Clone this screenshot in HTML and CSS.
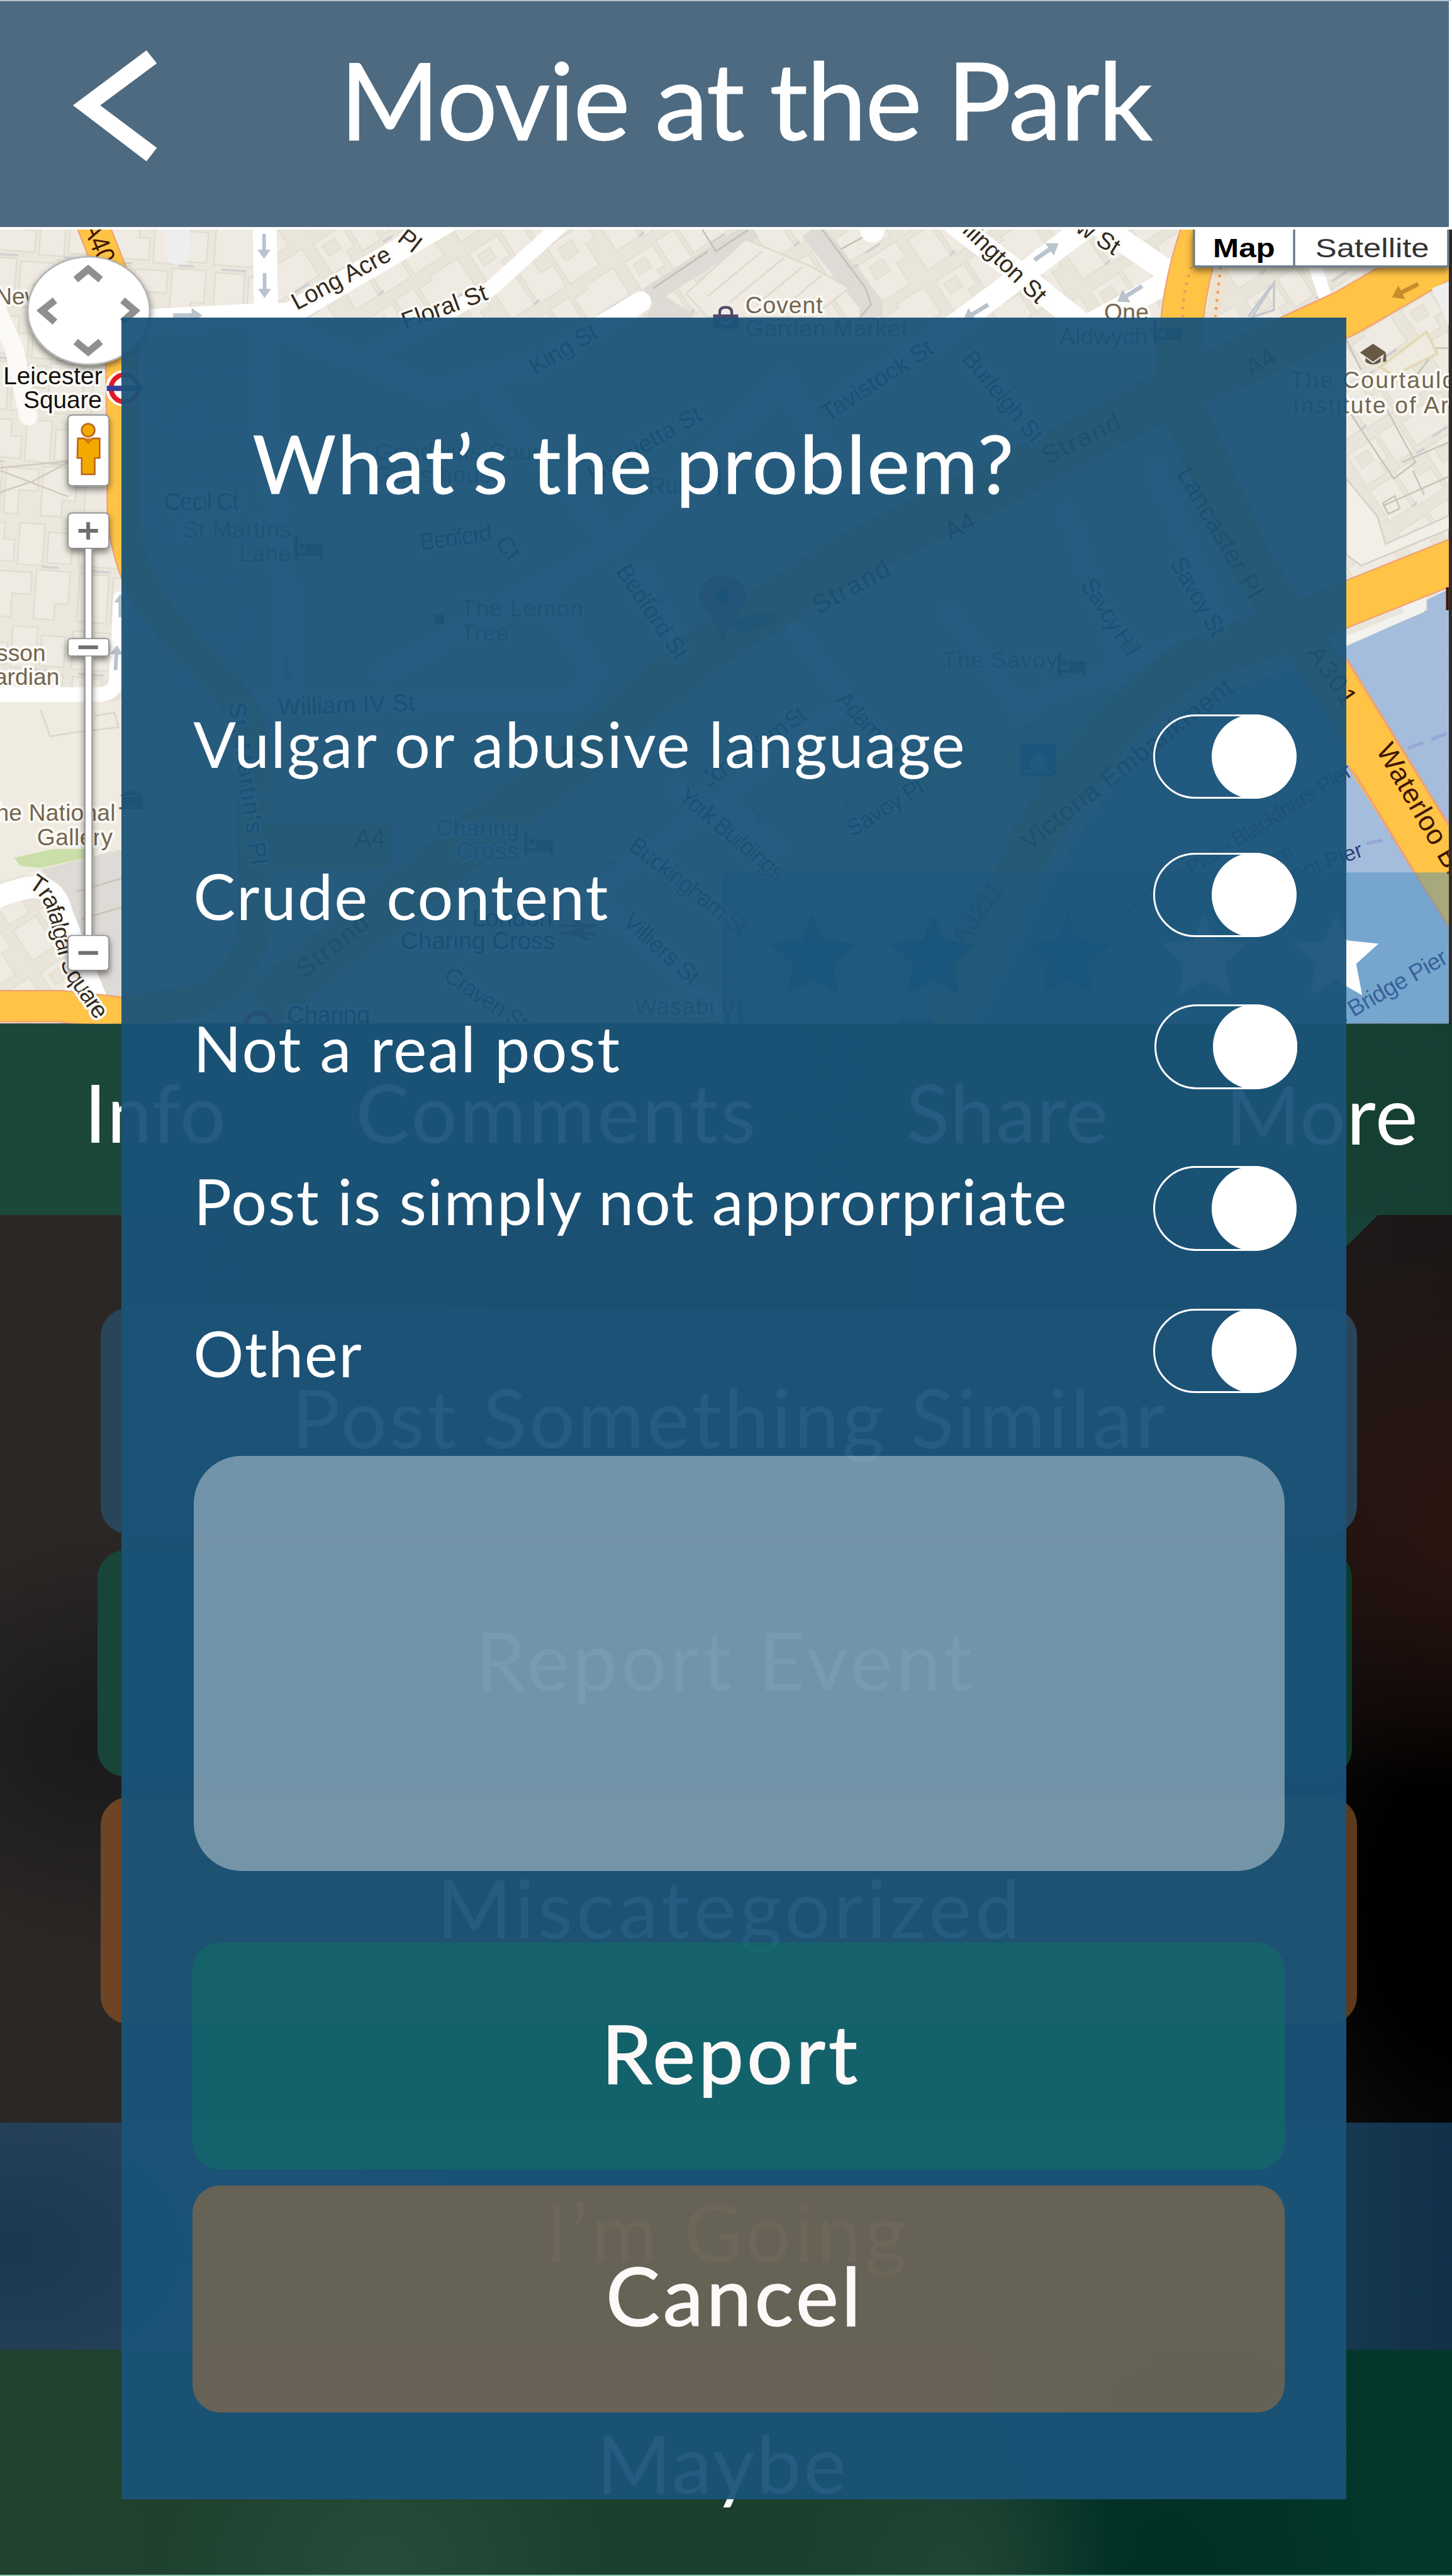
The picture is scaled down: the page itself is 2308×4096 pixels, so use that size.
FILE: index.html
```
<!DOCTYPE html>
<html lang="en">
<head>
<meta charset="utf-8">
<title>Movie at the Park</title>
<link rel="stylesheet" href="styles.css">
</head>
<body>
<div class="screen">
  <header class="topbar">
    <svg class="back" viewBox="0 0 155 204"><path d="M135 0 0 101 135 204 154 179 50 101 154 24Z" fill="#fff"/></svg>
    <h1>Movie at the Park</h1>
  </header>

  <svg class="map" viewBox="0 422 2667 1460" preserveAspectRatio="none">
    <defs>
      <pattern id="blocks" width="230" height="170" patternUnits="userSpaceOnUse" patternTransform="rotate(-33)">
        <rect width="230" height="170" fill="#e9e5da"/>
        <g fill="#efebe2" stroke="#e3ded2" stroke-width="2.5">
          <path d="M8 10h62v44h-18v22H8Z"/><path d="M78 8h40v62H78Z"/><path d="M126 14h30v-8h60v58h-90Z"/>
          <path d="M8 88h50v66H8Z"/><path d="M66 82h34v30h26v46H66Z"/><path d="M134 78h84v34h-20v46h-64Z"/>
          <path d="M150 92h30v26h-30Z" fill="#e9e5da"/><path d="M20 22h26v22H20Z" fill="#e9e5da"/>
        </g>
        <path d="M118 76h18M58 154l12-2M160 66h32" stroke="#cfccd2" stroke-width="4"/>
      </pattern>
      <pattern id="plots" width="210" height="190" patternUnits="userSpaceOnUse" patternTransform="rotate(4)">
        <rect width="210" height="190" fill="#ebe7dc"/>
        <g fill="#efebe2" stroke="#e0dbcf" stroke-width="2.5">
          <path d="M6 8h70v30h20v40H6Z"/><path d="M104 6h46v76h-46Z"/><path d="M158 20h44v56h-44Z"/>
          <path d="M10 92h54v88H10Z"/><path d="M72 96h60v40H98v44H72Z"/><path d="M140 90h62v60h-24v30h-38Z"/>
        </g>
        <path d="M20 86h46M150 84h30" stroke="#d3cfd2" stroke-width="4"/>
      </pattern>
      <filter id="soft" x="-20%" y="-20%" width="140%" height="150%"><feDropShadow dx="0" dy="6" stdDeviation="6" flood-color="#000" flood-opacity=".5"/></filter>
      <path id="trafalgar" d="M50 1632C100 1648 92 1740 124 1800L200 1910"/>
      <clipPath id="mapclip"><rect x="0" y="422" width="2661" height="1460"/></clipPath>
      <path id="star" d="M0-55 20-7 78-1 37 36 48 94 0 66-48 94-37 36-78-1-20-7Z"/>
      <g id="bed"><path d="M0 0v44M0 34h46M46 16v28" stroke-width="6" fill="none"/><path d="M18 16h26v14H18Z"/><circle cx="10" cy="19" r="5"/></g>
      <path id="arrow" d="M0-4h34v-10l20 14-20 14v-10H0Z"/>
    </defs>
    <rect x="0" y="422" width="2667" height="1460" fill="#302b29"/>
    <g clip-path="url(#mapclip)">
      <rect x="0" y="422" width="2661" height="1460" fill="url(#blocks)"/>
      <path d="M0 422H470V1270H0Z" fill="url(#plots)"/>
      <path d="M304 422H348V470Q348 487 326 487T304 462Z" fill="#eeeeee"/>
      <path d="M0 1290H223V1560L0 1620Z" fill="#efebe0"/>
      <path d="M75 1306 92 1354 132 1347 218 1337 210 1310 175 1316" fill="none" stroke="#dcd7ca" stroke-width="3"/>
      <path d="M0 860 125 848M0 865 125 913M0 905 60 885 125 850" fill="none" stroke="#d0cbbd" stroke-width="3"/>
      <path d="M75 1599 223 1562V1840L175 1830 120 1650Z" fill="#dedad5"/>
      <path d="M140 1640 223 1615M150 1690 223 1668" stroke="#c9c4b8" stroke-width="3"/>
      <path d="M26 1577 98 1561H172V1574L75 1596 37 1592Z" fill="#cadfaa"/>
      <g fill="none" stroke="#dedad5">
        <path d="M1385 422 1190 545" stroke-width="34"/><path d="M1490 422 1600 560V600" stroke-width="42"/>
        <path d="M1200 560 1262 600" stroke-width="50"/>
      </g>
      <g fill="none" stroke="#c5c0b3" stroke-width="3"><path d="M1290 422 1315 462 1375 422M1510 422 1590 530 1600 560 1580 583M1545 458 1585 436M1200 530 1300 462"/></g>
      <path d="M1260 540 1370 440 1490 490 1560 530 1490 583H1300Z" fill="#efebe2" stroke="#dfdace" stroke-width="3"/>
      <path d="M1300 545 1400 462M1340 556 1440 474M1390 560 1475 490M1440 565 1510 505" stroke="#dfdace" stroke-width="3"/>

      <g fill="none" stroke="#fff" stroke-linecap="round">
        <path d="M486 400 492 800 530 1140 528 1300" stroke-width="44"/>
        <path d="M260 590 486 578 530 578 825 405" stroke-width="42"/>
        <path d="M480 590 800 720 1000 660 1177 555" stroke-width="38"/>
        <path d="M700 640 900 532 1040 405" stroke-width="28"/>
        <path d="M1602 415V424" stroke-width="44"/>
        <path d="M1752 410 1900 525 1980 590" stroke-width="42"/>
        <path d="M2010 405 1765 590 1540 740" stroke-width="42"/>
        <path d="M2000 400 2160 510 1960 620" stroke-width="42"/>
        <path d="M2400 440 2432 540" stroke-width="24"/>
        <path d="M-10 560 26 640 52 765" stroke-width="34" stroke="#fbfaf6"/>
        <path d="M-10 1277H180Q215 1277 214 1240L222 1100" stroke-width="27"/>
        <path d="M-10 1652C60 1622 100 1620 114 1680L190 1870" stroke-width="40"/>
        <path d="M900 730 1130 1000 1440 700 1520 840" stroke-width="36"/>
        <path d="M700 1240 1130 1000M780 1290H1050L1090 1240 1000 1100M460 1290H900" stroke-width="34"/>
        <path d="M1460 1160 1560 1290 1120 1620M1240 1450 1440 1620M1080 1640 1340 1880M1330 1470 1470 1600 1900 1330" stroke-width="30"/>
        <path d="M2120 860 2250 1160M1960 940 2060 1240M1740 1120 1870 1300 2180 1180" stroke-width="30"/>
        <path d="M1180 1050 1270 1230" stroke-width="30"/>
      </g>
      <path d="M1430 1580 1750 1380 2080 1260 1850 1500 1700 1700H1480Z" fill="#cadfaa"/>

      <path d="M2661 1083 2621 1103V1122L2473 1188 2230 1280Q2050 1400 1930 1620L1800 1882H2661Z" fill="#a5bddc"/>
      <path d="M2661 1070 2621 1096 2616 1125 2473 1186V1130Z" fill="#f2f2ee"/>
      <path d="M2473 1170V1150L2570 1110 2580 1125Z" fill="#e9e5da"/>

      <g fill="none" stroke="#f0a077" stroke-linejoin="round">
        <path d="M165 400 222 545 226 950Q240 1080 320 1160L410 1260Q462 1310 466 1400L468 1690Q460 1800 360 1840L223 1862 110 1850-10 1850" stroke-width="60"/>
        <path d="M468 1556H720M480 1850 760 1630 1050 1400 1300 1190 1550 1030 1850 880 2124 735 2300 655 2473 575 2680 455" stroke-width="88"/>
        <path d="M2218 400C2170 520 2170 600 2160 720L2300 1040 2470 1290 2720 1720" stroke-width="80"/>
        <path d="M2700 1020 2400 1140 2180 1220Q2000 1360 1900 1540L1740 1890" stroke-width="84"/>
      </g>
      <g fill="none" stroke="#ffc345" stroke-linejoin="round">
        <path d="M165 400 222 545 226 950Q240 1080 320 1160L410 1260Q462 1310 466 1400L468 1690Q460 1800 360 1840L223 1862 110 1850-10 1850" stroke-width="55"/>
        <path d="M468 1556H720M480 1850 760 1630 1050 1400 1300 1190 1550 1030 1850 880 2124 735 2300 655 2473 575 2680 455" stroke-width="83"/>
        <path d="M2218 400C2170 520 2170 600 2160 720L2300 1040 2470 1290 2720 1720" stroke-width="75"/>
        <path d="M2700 1020 2400 1140 2180 1220Q2000 1360 1900 1540L1740 1890" stroke-width="79"/>
      </g>
      <path d="M2473 1211 2661 1517V1704L2598 1604 2473 1406Z" fill="#ffc345"/>
      <path d="M2473 1211 2661 1517M2661 1704 2598 1604 2490 1425 2473 1406" fill="none" stroke="#f0a077" stroke-width="4"/>
      <path d="M2235 490Q2215 540 2218 583H2240L2258 490Z" fill="#ede3cf"/>
      <path d="M2188 490Q2172 540 2172 583M2242 490 2232 583" fill="none" stroke="#ef9a62" stroke-width="5" stroke-dasharray="5 10"/>
      <path d="M2586 1376 2661 1347M2510 1551 2557 1541" stroke="#98a6d8" stroke-width="6" stroke-dasharray="30 16"/>

      <g fill="none" stroke="#c9c4b8" stroke-width="3">
        <path d="M2473 625 2500 680M2575 850 2680 805M2595 865 2616 910M2540 930 2680 868M2600 640 2680 640M2594 700 2640 640" />
        <path d="M2480 760 2540 740 2600 850 2560 880ZM2500 1030 2680 950M2540 925 2550 945 2571 935 2562 912Z"/>
      </g>
      <path d="M2473 880 2530 950 2545 1000 2680 940V965L2500 1040 2473 1020Z" fill="#f2efe6" stroke="#d6d1c8" stroke-width="3"/>
      <path d="M2535 675 2620 610 2640 650 2560 690Z" fill="#efebe0" stroke="#e3d9b6" stroke-width="5"/>
      <path d="M2340 520 2300 583 2340 570ZM2293 582 2335 525" fill="none" stroke="#c3c7d0" stroke-width="4"/>
      <path d="M2630 530 2680 510V640Z" fill="#eeeeee"/>

      <g fill="#b9c3ce">
        <use href="#arrow" transform="translate(485 430) rotate(90) scale(.85)"/><use href="#arrow" transform="translate(486 502) rotate(90) scale(.85)"/>
        <use href="#arrow" transform="translate(318 580)"/><use href="#arrow" transform="translate(212 1232) rotate(-86) scale(.85)"/>
        <use href="#arrow" transform="translate(1900 478) rotate(-35)"/><use href="#arrow" transform="translate(2098 526) rotate(148)"/>
        <use href="#arrow" transform="translate(1815 560) rotate(148)"/><use href="#arrow" transform="translate(221 1135) rotate(-90) scale(.8)"/>
        <use href="#arrow" transform="translate(370 735) rotate(148)"/><use href="#arrow" transform="translate(1180 1120) rotate(-30)"/>
        <use href="#arrow" transform="translate(1375 1478) rotate(48)"/><use href="#arrow" transform="translate(1595 1455) rotate(148)"/>
        <use href="#arrow" transform="translate(1090 1615) rotate(-40)"/><use href="#arrow" transform="translate(527 1205) rotate(90)"/>
      </g>
      <use href="#arrow" transform="translate(2605 522) rotate(153)" fill="#c58e2b"/>

      <g class="road">
        <text x="152" y="416" textLength="78" lengthAdjust="spacingAndGlyphs" transform="rotate(68 152 416)" style="font-size:50px;fill:#401600;stroke:none">A40</text>
        <text x="728" y="442" transform="rotate(38 728 442)">Pl</text>
        <text x="545" y="571" textLength="200" transform="rotate(-28 545 571)">Long Acre</text>
        <text x="744" y="606" textLength="164" transform="rotate(-20 744 606)">Floral St</text>
        <text x="983" y="690" textLength="138" transform="rotate(-31 983 690)">King St</text>
        <text x="1090" y="888" textLength="234" transform="rotate(-30 1090 888)">Henrietta St</text>
        <text x="1520" y="776" textLength="236" transform="rotate(-33 1520 776)">Tavistock St</text>
        <text x="1905" y="560" text-anchor="end" transform="rotate(44 1905 560)">Wellington St</text>
        <text x="2046" y="470" text-anchor="end" transform="rotate(32 2046 470)">Bow St</text>
        <text x="1765" y="660" textLength="205" transform="rotate(50 1765 660)">Burleigh St</text>
        <text x="1130" y="1050" textLength="200" transform="rotate(56 1130 1050)">Bedford St</text>
        <text x="1300" y="1450" textLength="225" transform="rotate(-35 1300 1450)">John Adam St</text>
        <text x="1533" y="1288" textLength="150" transform="rotate(47 1533 1288)">Adam St</text>
        <text x="1243" y="1468" textLength="240" transform="rotate(40 1243 1468)">York Buildings</text>
        <text x="1152" y="1560" textLength="262" transform="rotate(38 1152 1560)">Buckingham St</text>
        <text x="1142" y="1698" textLength="172" transform="rotate(42 1142 1698)">Villiers St</text>
        <text x="1565" y="1540" textLength="160" transform="rotate(-32 1565 1540)">Savoy Pl</text>
        <text x="2148" y="1035" textLength="160" transform="rotate(60 2148 1035)">Savoy St</text>
        <text x="1984" y="1075" textLength="160" transform="rotate(57 1984 1075)">Savoy Hill</text>
        <text x="511" y="1315" textLength="252" transform="rotate(-2 511 1315)">William IV St</text>
        <text x="420" y="1294" textLength="300" transform="rotate(82 420 1294)">St. Martin's Pl</text>
        <text x="812" y="1800" textLength="175" transform="rotate(34 812 1800)">Craven St</text>
        <text x="773" y="1012" textLength="134" transform="rotate(-8 773 1012)">Bedford</text>
        <text x="908" y="1000" transform="rotate(50 908 1000)">Ct</text>
        <text x="301" y="938" textLength="138">Cecil Ct</text>
        <text><textPath href="#trafalgar" textLength="282">Trafalgar Square</textPath></text>
      </g>
      <g class="trunk">
        <text x="1923" y="855" textLength="155" transform="rotate(-26 1923 855)">Strand</text>
        <text x="1503" y="1130" textLength="155" transform="rotate(-29 1503 1130)">Strand</text>
        <text x="560" y="1800" textLength="155" transform="rotate(-39 560 1800)">Strand</text>
        <text x="2160" y="870" textLength="270" transform="rotate(60 2160 870)">Lancaster Pl</text>
        <text x="2298" y="694" transform="rotate(-30 2298 694)">A4</text>
        <text x="1745" y="995" transform="rotate(-28 1745 995)">A4</text>
        <text x="1040" y="1408" transform="rotate(-36 1040 1408)">A4</text>
        <text x="651" y="1558">A4</text>
        <text x="1890" y="1565" textLength="480" transform="rotate(-38 1890 1565)">Victoria Embankment</text>
        <text x="1770" y="1740" textLength="130" transform="rotate(-55 1770 1740)">A3211</text>
        <text x="2400" y="1200" textLength="122" transform="rotate(56 2400 1200)">A301</text>
        <text x="2527" y="1379" textLength="372" transform="rotate(60 2527 1379)" style="font-size:51px">Waterloo Bridge</text>
      </g>
      <path d="M2656 1080h6v42h-6Z" fill="#401600"/>
      <g class="pier">
        <text x="1990" y="1735" textLength="585" transform="rotate(-32 1990 1735)">Embankment Pier - Blackfriars Pier</text>
        <text x="2005" y="1805" textLength="440" transform="rotate(-32 2005 1805)">Bankside Pier - Embankm</text>
        <text x="2378" y="1620" textLength="136" transform="rotate(-20 2378 1620)">ent Pier</text>
        <text x="2662" y="1769" text-anchor="end" textLength="352" transform="rotate(-30 2662 1769)" style="font-size:43px;stroke-width:0">London Bridge Pier</text>
      </g>
      <g class="place">
        <text x="-9" y="560">New</text>
        <text x="1369" y="576" textLength="142">Covent</text><text x="1369" y="619" textLength="298">Garden Market</text>
        <text x="2028" y="589" textLength="82">One</text><text x="1946" y="634" textLength="162">Aldwych</text>
        <text x="2370" y="713" textLength="303">The Courtauld</text><text x="2375" y="760" textLength="300">Institute of Art</text>
        <text x="336" y="989" textLength="199">St Martins</text><text x="439" y="1032" textLength="96">Lane</text>
        <text x="689" y="845" textLength="316">Goodwins Court</text><text x="689" y="888" textLength="238">Guesthouse</text>
        <text x="1191" y="908" textLength="109">Rules</text>
        <text x="847" y="1133" textLength="224">The Lemon</text><text x="847" y="1178" textLength="88">Tree</text>
        <text x="1731" y="1228" textLength="212">The Savoy</text>
        <text x="801" y="1537" textLength="153">Charing</text><text x="838" y="1580" textLength="115">Cross</text>
        <text x="1166" y="1865" textLength="146">Wasabi</text>
        <text x="84" y="1215" text-anchor="end">Wesson</text><text x="109" y="1259" text-anchor="end">Guardian</text>
        <text x="-34" y="1509" textLength="246">The National</text><text x="68" y="1554" textLength="139">Gallery</text>
      </g>
      <g class="station">
        <text x="6" y="707" textLength="182">Leicester</text><text x="43" y="750" textLength="144">Square</text>
        <text x="867" y="1703" textLength="148">London</text><text x="736" y="1745" textLength="284">Charing Cross</text>
        <text x="527" y="1881" textLength="153">Charing</text>
      </g>
      <g fill="#665a45" stroke="#665a45"><use href="#bed" x="544" y="985"/><use href="#bed" x="966" y="1528"/><use href="#bed" x="2122" y="588"/><use href="#bed" x="1946" y="1200"/></g>
      <g fill="#665a45">
        <path d="M2498 648 2522 632 2546 648 2522 665Z"/><path d="M2508 658V665Q2522 675 2536 665V658L2522 668Z"/><path d="M2542 650h4v15h-6Z"/>
        <path d="M220 1463 242 1452 264 1463ZM224 1465h38v18h-38ZM219 1484h48v4h-48Z"/><rect x="798" y="1130" width="18" height="18"/>
        <path d="M1328 1840h6v20h6v-20h6v20h-6v24h-6v-24h-6ZM1356 1840h8v44h-8ZM1318 862h6v50h-6ZM1340 862h8v50h-8Z"/>
      </g>
      <path d="M1310 578h46v26h-46Z" fill="#4c4a6a"/><path d="M1322 578v-4q0-9 11-9t11 9v4" fill="none" stroke="#4c4a6a" stroke-width="5"/>
      <path d="M1322 588q11 12 22 0" fill="none" stroke="#fff" stroke-width="4"/>
      <circle cx="227" cy="714" r="25" fill="#fff" stroke="#fff" stroke-width="16"/>
      <circle cx="229" cy="714" r="25" fill="#fff" stroke="#e01b24" stroke-width="9"/><path d="M196 709h67v10h-67Z" fill="#3a3c96"/>
      <circle cx="474" cy="1884" r="22" fill="#fff" stroke="#e01b24" stroke-width="9"/>
      <path d="M1028 1702h66M1028 1716h66M1050 1692l30 12-30 10 32 14" fill="none" stroke="#c8434a" stroke-width="6"/>
      <rect x="1874" y="1368" width="66" height="60" rx="10" fill="#2f78b8"/><path d="M1890 1398l17-12 17 12-6 16h-22ZM1882 1418h50" fill="#a9c8e6" stroke="#a9c8e6" stroke-width="4"/>
      <rect x="1650" y="1872" width="66" height="40" rx="8" fill="#2f78b8"/>
      <ellipse cx="1385" cy="1143" rx="45" ry="15" transform="rotate(-12 1385 1143)" fill="#6d6a50" opacity=".6"/>
      <path d="M1328 1190Q1320 1150 1296 1122A43 38 0 1 1 1358 1122Q1334 1150 1328 1190Z" fill="#d1606a"/><circle cx="1326" cy="1096" r="13" fill="#28405f"/>
    </g>

    <g filter="url(#soft)"><ellipse cx="163" cy="571" rx="112" ry="99" fill="#fff" stroke="#b4b4b4" stroke-width="3"/></g>
    <path d="M139 514 162 495 185 514M139 628 162 647 185 628M101 552 77 571 101 592M225 552 248 571 225 592" fill="none" stroke="#8f8f8f" stroke-width="13"/>
    <g filter="url(#soft)" fill="#fff" stroke="#8b8b8b" stroke-width="2">
      <rect x="125" y="763" width="75" height="130" rx="7"/><rect x="156" y="1000" width="13" height="730"/>
      <rect x="125" y="943" width="75" height="65" rx="7"/><rect x="125" y="1174" width="75" height="32" rx="5"/><rect x="125" y="1720" width="75" height="64" rx="7"/>
    </g>
    <g fill="#f2aa00" stroke="#b9651c" stroke-width="3"><path d="M143 806h12l7 8 8-8h13v36h-9v30h-24v-30h-8Z"/><circle cx="162" cy="791" r="12"/></g>
    <path d="M155 806h15l-8 10Z" fill="#e07614"/>
    <path d="M144 976h36M162 960v32M144 1190h36M144 1752h36" stroke="#6f6f6f" stroke-width="7"/>
    <g filter="url(#soft)"><path d="M2191 422H2661V490H2191Z" fill="#fff"/><path d="M2193 422V490H2661M2377 422V490M2660 422V490" fill="none" stroke="#6c7a8a" stroke-width="4"/></g>
    <g class="switch"><text x="2228" y="473" textLength="114" lengthAdjust="spacingAndGlyphs" font-weight="700" fill="#000">Map</text><text x="2416" y="473" textLength="209" lengthAdjust="spacingAndGlyphs" fill="#333">Satellite</text></g>
    <path d="M1326 1604H2661V1882H1326Z" fill="#408cbe" fill-opacity=".46"/>
    <g fill="#1579b5"><use href="#star" x="1493" y="1736"/><use href="#star" x="1714" y="1736"/><use href="#star" x="1962" y="1736"/></g>
    <g fill="#fff"><use href="#star" x="2212" y="1736"/><use href="#star" x="2454" y="1736"/></g>
  </svg>

  <nav class="tabs"><span>Info</span><span>Comments</span><span>Share</span><span>More</span></nav>

  <section class="actions">
    <div class="action similar">Post Something Similar</div>
    <div class="action report-event">Report Event</div>
    <div class="action miscat">Miscategorized</div>
  </section>
  <div class="rsvp going">I’m Going</div>
  <div class="rsvp maybe">Maybe</div>

  <div class="modal">
    <h2>What’s the problem?</h2>
    <div class="options">
      <div class="option o1"><span>Vulgar or abusive language</span><i class="toggle"></i></div>
      <div class="option o2"><span>Crude content</span><i class="toggle"></i></div>
      <div class="option o3"><span>Not a real post</span><i class="toggle"></i></div>
      <div class="option o4"><span>Post is simply not approrpriate</span><i class="toggle"></i></div>
      <div class="option o5"><span>Other</span><i class="toggle"></i></div>
    </div>
    <div class="note"></div>
    <div class="btn report">Report</div>
    <div class="btn cancel">Cancel</div>
  </div>
</div>
</body>
</html>
```
FILE: styles.css
```
* { box-sizing: border-box; }
html { font-size: 86.539px; }
body { margin: 0; width: 2308px; height: 4096px; overflow: hidden; font-family: Lato, sans-serif; color: #fff; background: #232020; }
h1, h2 { margin: 0; font-weight: 400; }

.screen {
  position: relative; width: 2308px; height: 4096px; display: flex; flex-direction: column; overflow: hidden;
  background:
    radial-gradient(ellipse 5.5rem 5rem at 27rem 28rem, #2c1510 0%, rgba(40,18,14,0) 100%),
    radial-gradient(ellipse 6rem 9rem at 27rem 35rem, #000 30%, rgba(0,0,0,0) 100%),
    radial-gradient(ellipse 5rem 4rem at 1.8rem 32rem, #19191b 0%, rgba(25,25,27,0) 100%),
    linear-gradient(90deg, #2c2826 0%, #252120 60%, #1c1716 100%);
}

.topbar {
  height: 4.22rem; flex: none; display: flex; align-items: flex-start; background: #4d6a80;
  border-top: 2px solid #b4bfc8; border-bottom: 4px solid #fff; border-right: 5px solid #fff;
}
.back { width: 1.55rem; height: 2.04rem; margin: .9rem 0 0 1.34rem; }
h1 { margin: .8rem 0 0 3.35rem; font-size: 1.98rem; line-height: 1; letter-spacing: -.0138em; white-space: nowrap; -webkit-text-stroke: .01rem #fff; }

.map { display: block; flex: none; width: 100%; height: 14.59rem; font-family: "Liberation Sans", Arial, sans-serif; }
.map text { paint-order: stroke; stroke: #fbfaf6; stroke-width: 9px; stroke-linejoin: round; }
.road text { font-size: 44px; fill: #33291d; }
.trunk text { font-size: 47px; fill: #401600; stroke: none; }
.pier text { font-size: 40px; fill: #33407c; stroke: #a5bddc; stroke-width: 3px; }
.place text { font-size: 43px; fill: #74654f; }
.station text { font-size: 45px; fill: #14100c; }
.switch text { font-size: 50px; stroke: none; }

.tabs {
  flex: none; height: 3.52rem; display: grid; grid-template-columns: 5.75rem 9.53rem 6.62rem 4.77rem; position: relative;
  background: linear-gradient(90deg, #1c483b, #1b4537 50%, #163f34);
  font-size: 1.48rem; line-height: 1; letter-spacing: .012em; text-align: center;
}
.tabs span { padding-top: .88rem; border-right: .08rem solid rgba(0,20,15,.45); white-space: nowrap; }
.tabs span:first-child { padding-left: .03rem; }
.tabs span:nth-child(2) { padding-right: .5rem; letter-spacing: .032em; }
.tabs span:nth-child(3) { padding-right: .1rem; }
.tabs span:last-child { border: 0; padding-top: .91rem; }
.tabs::after { content: ""; position: absolute; top: 100%; left: 23.67rem; border: .83rem solid transparent; border-top-color: #17423a; border-bottom: 0; }

.actions { flex: none; height: 16.67rem; padding: 1.71rem 1.75rem 0 1.85rem; font-size: 1.48rem; line-height: 1; letter-spacing: .0385em; text-align: center; white-space: nowrap; }
.action { height: 4.14rem; border-radius: .51rem; padding: 1.26rem 0 0 .04rem; }
.similar { background: #29455a; letter-spacing: .0365em; }
.report-event { background: linear-gradient(90deg, #18453a, #0d3b2e); margin: .31rem .09rem 0 -.06rem; height: 4.16rem; padding: 1.27rem 0 0 .04rem; letter-spacing: .041em; }
.miscat { background: linear-gradient(90deg, #6d4524, #5f3a1a); margin-top: .38rem; height: 4.16rem; padding: 1.28rem 0 0 .06rem; letter-spacing: .0445em; }

.rsvp { flex: none; height: 4.17rem; font-size: 1.48rem; line-height: 1; letter-spacing: .037em; text-align: center; padding: 1.26rem 0 0 .05rem; }
.going {
  background: radial-gradient(ellipse 4rem 3rem at .3rem 2.3rem, #1a3850, rgba(26,56,80,0)), linear-gradient(90deg, #28435a, #1d4058 85%, #11304a);
}
.maybe {
  padding: 1.34rem .14rem 0 0; letter-spacing: .024em; border-bottom: .04rem solid #8ccbb7;
  background:
    radial-gradient(ellipse 4rem 3.5rem at 7rem 4rem, #274c3b, rgba(39,76,59,0)),
    radial-gradient(ellipse 3rem 3rem at 17.5rem 4rem, #224534, rgba(34,69,52,0)),
    radial-gradient(ellipse 4rem 5rem at 21.5rem 4rem, #003026 20%, rgba(0,48,38,0)),
    linear-gradient(90deg, #20422f, #1a3f2d 60%, #02362a 85%, #04382c);
}

.modal {
  position: absolute; left: 2.23rem; top: 5.83rem; width: 22.5rem; height: 40.09rem;
  padding: 1.94rem 1.12rem 0 1.31rem; background: rgba(26,83,120,.95);
}
h2 { margin-left: 1.1rem; font-size: 1.48rem; line-height: 1; letter-spacing: .0215em; white-space: nowrap; -webkit-text-stroke: .01rem #fff; }
.options { margin: 3.6rem -.3rem 0 .01rem; display: grid; grid-auto-rows: 1.55rem; row-gap: 1.25rem; }
.option { display: flex; justify-content: space-between; align-items: flex-start; }
.option span { margin-top: .23rem; font-size: 1.16rem; line-height: 1; letter-spacing: .0215em; white-space: nowrap; }
.o4 span { letter-spacing: .0168em; margin-left: .01rem; }
.o5 span { letter-spacing: .015em; }
.toggle { flex: none; width: 2.63rem; height: 1.55rem; border: .035rem solid #fff; border-radius: .8rem; display: flex; justify-content: flex-end; }
.toggle::after { content: ""; width: 1.55rem; height: 1.55rem; margin: -.035rem; border-radius: 50%; background: #fff; }
.option .toggle { margin-right: .1rem; }
.o1 .toggle { margin-top: .28rem; }
.o2 .toggle { margin-top: .02rem; }
.option.o3 .toggle { margin: .01rem .08rem 0 0; }
.o4 .toggle { margin-top: .18rem; }
.note { margin-top: 1.15rem; margin-left: .015rem; width: 20.04rem; height: 7.63rem; border-radius: .88rem; background: rgba(255,255,255,.385); }
.btn { width: 20.06rem; height: 4.17rem; border-radius: .51rem; font-size: 1.48rem; line-height: 1; letter-spacing: .041em; text-align: center; color: #fdf9f9; -webkit-text-stroke: .02rem #fdf9f9; }
.report { margin-top: 1.32rem; padding: 1.28rem .28rem 0 0; background: rgba(15,110,102,.6); }
.cancel { margin-top: .285rem; padding: 1.27rem .14rem 0 0; background: rgba(179,114,54,.5); }
```
